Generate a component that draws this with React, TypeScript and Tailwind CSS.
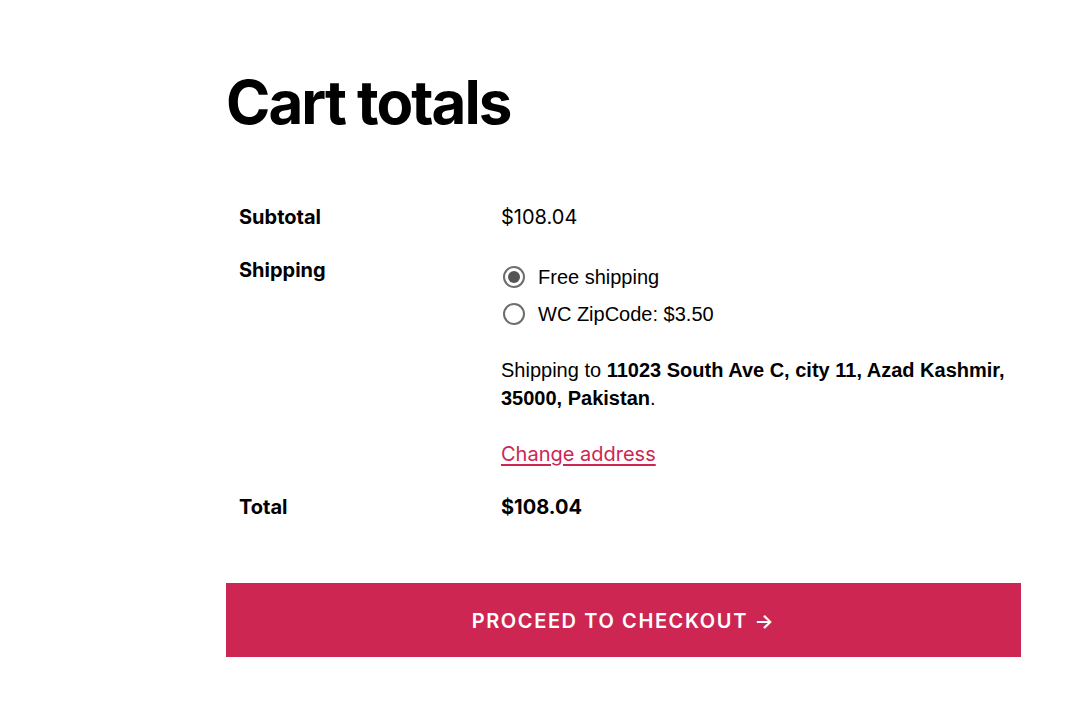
import * as React from "react";

const inter = "font-['Inter',sans-serif]";
const arial = "font-['Liberation_Sans',Arial,sans-serif]";

function Radio({ checked, label }: { checked?: boolean; label: string }) {
  return (
    <label className={`ml-[2px] flex items-center gap-[13px] ${arial} text-[20px] leading-[30px] text-black`}>
      <span className="flex h-[22px] w-[22px] items-center justify-center rounded-full border-2 border-[#6d6d6d] bg-white">
        {checked ? <span className="h-[12px] w-[12px] rounded-full bg-[#555]" /> : null}
      </span>
      {label}
    </label>
  );
}

function Row({
  label,
  children,
}: {
  label: string;
  children: React.ReactNode;
}) {
  return (
    <div className="flex py-[11.5px]">
      <div className={`w-[275px] shrink-0 pl-[13px] ${inter} text-[20px] font-bold leading-[30px] text-black`}>
        {label}
      </div>
      <div className="flex-1">{children}</div>
    </div>
  );
}

export default function App() {
  return (
    <div className="min-h-[715px] bg-white">
      <div className="ml-[226px] w-[795px]">
        <h1
          className={`pt-[69px] ${inter} text-[60px] font-bold leading-[66px] tracking-[-0.033em] text-black`}
        >
          Cart totals
        </h1>

        <div className="mt-[55px]">
          <Row label="Subtotal">
            <span className={`${inter} text-[20px] leading-[30px] text-black`}>$108.04</span>
          </Row>

          <Row label="Shipping">
            <div className="mt-[7px] flex flex-col gap-[7px]">
              <Radio checked label="Free shipping" />
              <Radio label="WC ZipCode: $3.50" />
            </div>
            <p className={`mt-[27px] ${arial} text-[20px] leading-[28px] text-black`}>
              Shipping to{" "}
              <strong className="font-bold">
                11023 South Ave C, city 11, Azad Kashmir, 35000, Pakistan
              </strong>
              .
            </p>
            <a
              href="#"
              className={`mt-[27px] block w-fit ${inter} text-[20px] leading-[30px] text-[#cd2653] underline underline-offset-[3px]`}
            >
              Change address
            </a>
          </Row>

          <Row label="Total">
            <span className={`${inter} text-[20px] font-bold leading-[30px] text-black`}>
              $108.04
            </span>
          </Row>
        </div>

        <button
          type="button"
          className={`mt-[50px] flex h-[74px] w-full items-center justify-center bg-[#cd2653] pt-[2px] ${inter} text-[20px] font-semibold uppercase tracking-[0.08em] text-white`}
        >
          Proceed to checkout →
        </button>
      </div>
    </div>
  );
}
